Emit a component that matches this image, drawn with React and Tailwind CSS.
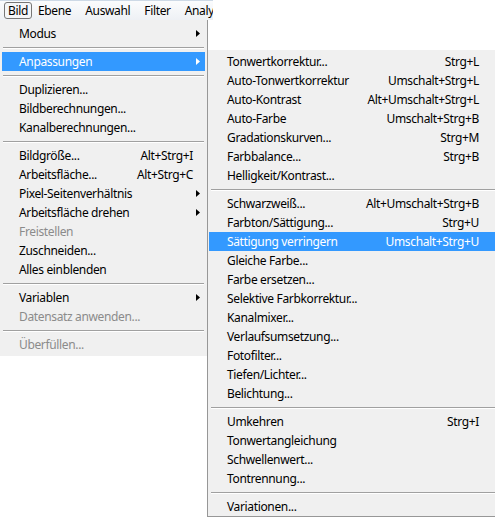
import React from "react";

const FONT = { fontFamily: '"Segoe UI", "Noto Sans", "Open Sans", sans-serif' };

const bildMenu = [
  { label: "Modus", sub: true },
  "sep",
  { label: "Anpassungen", sub: true, active: true },
  "sep",
  { label: "Duplizieren..." },
  { label: "Bildberechnungen..." },
  { label: "Kanalberechnungen..." },
  "sep",
  { label: "Bildgröße...", keys: "Alt+Strg+I" },
  { label: "Arbeitsfläche...", keys: "Alt+Strg+C" },
  { label: "Pixel-Seitenverhältnis", sub: true },
  { label: "Arbeitsfläche drehen", sub: true },
  { label: "Freistellen", disabled: true },
  { label: "Zuschneiden..." },
  { label: "Alles einblenden" },
  "sep",
  { label: "Variablen", sub: true },
  { label: "Datensatz anwenden...", disabled: true },
  "sep",
  { label: "Überfüllen...", disabled: true },
];

const adjustMenu = [
  { label: "Tonwertkorrektur...", keys: "Strg+L" },
  { label: "Auto-Tonwertkorrektur", keys: "Umschalt+Strg+L" },
  { label: "Auto-Kontrast", keys: "Alt+Umschalt+Strg+L" },
  { label: "Auto-Farbe", keys: "Umschalt+Strg+B" },
  { label: "Gradationskurven...", keys: "Strg+M" },
  { label: "Farbbalance...", keys: "Strg+B" },
  { label: "Helligkeit/Kontrast..." },
  "sep",
  { label: "Schwarzweiß...", keys: "Alt+Umschalt+Strg+B" },
  { label: "Farbton/Sättigung...", keys: "Strg+U" },
  { label: "Sättigung verringern", keys: "Umschalt+Strg+U", active: true },
  { label: "Gleiche Farbe..." },
  { label: "Farbe ersetzen..." },
  { label: "Selektive Farbkorrektur..." },
  { label: "Kanalmixer..." },
  { label: "Verlaufsumsetzung..." },
  { label: "Fotofilter..." },
  { label: "Tiefen/Lichter..." },
  { label: "Belichtung..." },
  "sep",
  { label: "Umkehren", keys: "Strg+I" },
  { label: "Tonwertangleichung" },
  { label: "Schwellenwert..." },
  { label: "Tontrennung..." },
  "sep",
  { label: "Variationen..." },
];

function Arrow({ white }) {
  return (
    <svg width="4" height="7" viewBox="0 0 4 7" className="shrink-0">
      <path d="M0 0 L4 3.5 L0 7 Z" fill={white ? "#ffffff" : "#000000"} />
    </svg>
  );
}

function Separator({ inset }) {
  return (
    <div className={"h-[9px] flex flex-col justify-center " + inset}>
      <div className="h-px bg-[#a0a0a0]" />
      <div className="h-px bg-white" />
    </div>
  );
}

function MenuItem({ item, padLeft, padRight, keysGap }) {
  const text = item.active
    ? "text-white"
    : item.disabled
    ? "text-[#8b8b8b]"
    : "text-black";
  return (
    <div
      className={
        "h-[19px] flex items-center " +
        padLeft +
        " " +
        padRight +
        " " +
        text +
        (item.active ? " bg-[#3399ff]" : "")
      }
    >
      <span className="grow whitespace-nowrap">{item.label}</span>
      {item.keys && <span className={"whitespace-nowrap " + keysGap}>{item.keys}</span>}
      {item.sub && <Arrow white={item.active} />}
    </div>
  );
}

export default function App() {
  return (
    <div
      className="w-[495px] h-[519px] bg-white overflow-hidden text-[12px] leading-[19px] tracking-[-0.35px]"
      style={FONT}
    >
      <div className="flex">
        <div className="w-[207px] shrink-0">
          {/* menu bar */}
          <div className="w-[213px] h-[20px] flex items-center overflow-hidden bg-gradient-to-b from-[#fbfcfd] to-[#eef1f5] border-t border-[#cdd9e6] text-black relative z-10">
            <div className="ml-[4px] h-[17px] px-[3px] flex items-center border border-[#777] rounded-[3px] bg-[#f4f6f8]">
              Bild
            </div>
            <span className="ml-[6px]">Ebene</span>
            <span className="ml-[14px]">Auswahl</span>
            <span className="ml-[14px]">Filter</span>
            <span className="ml-[14px] whitespace-nowrap">Analyse</span>
          </div>

          {/* Bild menu */}
          <div className="w-[208px] bg-[#f0f0f0] border-r border-[#979797] pt-[4px] pb-[2px] px-[2px]">
            {bildMenu.map((item, i) =>
              item === "sep" ? (
                <Separator key={i} inset="mx-[1px]" />
              ) : (
                <MenuItem
                  key={i}
                  item={item}
                  padLeft="pl-[17px]"
                  padRight="pr-[5px]"
                  keysGap="mr-[7px]"
                />
              )
            )}
          </div>
        </div>

        {/* Anpassungen submenu */}
        <div className="mt-[50px] w-[290px] shrink-0 bg-[#f0f0f0] border-l border-b border-[#979797] pt-[2px] px-[1px]">
          {adjustMenu.map((item, i) =>
            item === "sep" ? (
              <Separator key={i} inset="ml-[2px]" />
            ) : (
              <MenuItem
                key={i}
                item={item}
                padLeft="pl-[18px]"
                padRight="pr-[17px]"
                keysGap=""
              />
            )
          )}
        </div>
      </div>
    </div>
  );
}
